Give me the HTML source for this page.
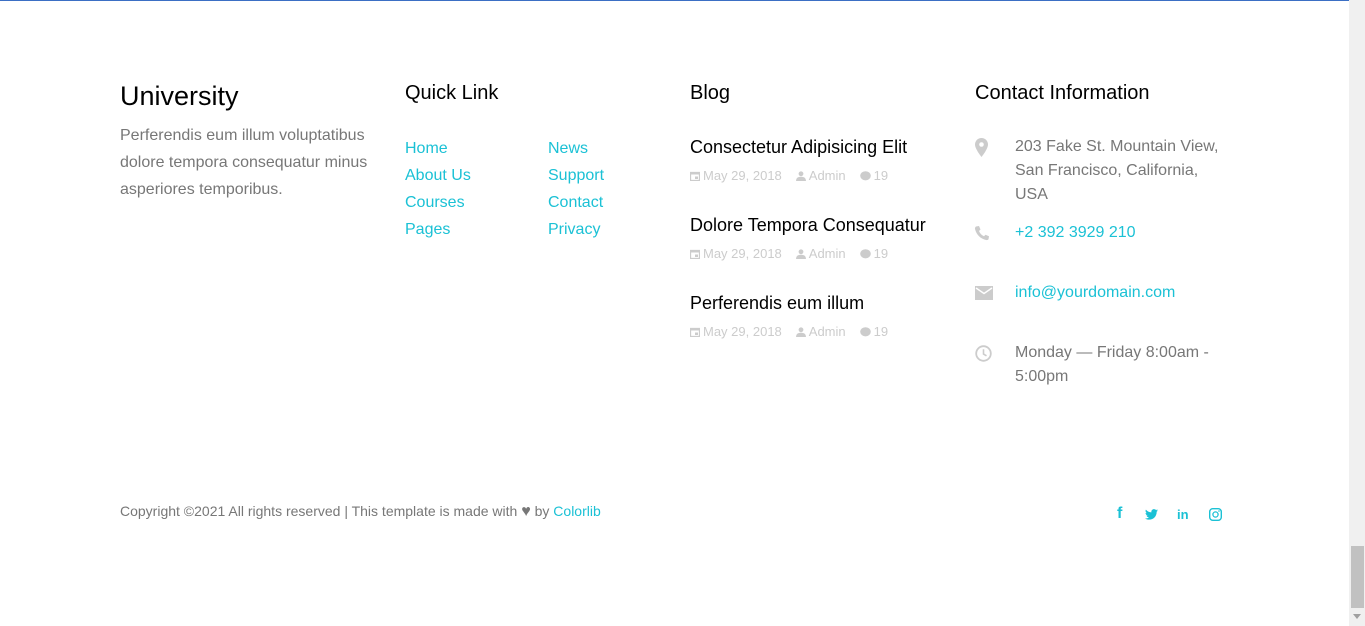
<!DOCTYPE html>
<html><head><meta charset="utf-8">
<style>
*{margin:0;padding:0;box-sizing:border-box}
html,body{width:1365px;height:626px;overflow:hidden;background:#fff;font-family:"Liberation Sans",Arial,sans-serif}
.a{position:absolute;white-space:nowrap}
.topline{position:absolute;left:0;top:0;width:1349px;height:1px;background:#3b6fc4}
.sb{position:absolute;left:1349px;top:0;width:16px;height:626px;background:#f0f0f0}
.thumb{position:absolute;left:1351px;top:546px;width:13px;height:62px;background:#c1c1c1}
.gray{color:#777;font-size:16px;line-height:27px}
.link{color:#1bc1d5;font-size:16px}
.bt{color:#000;font-size:18px}
.meta{color:#ccc;font-size:13px;display:flex;align-items:center}
.meta svg{margin-right:3px}
.ct{color:#777;font-size:16px;line-height:24px}
</style></head><body>
<div class="topline"></div>
<div class="a" style="left:120px;top:81px;font-size:27px;color:#000">University</div>
<div class="a gray" style="left:120px;top:122px">Perferendis eum illum voluptatibus<br>dolore tempora consequatur minus<br>asperiores temporibus.</div>

<div class="a" style="left:405px;top:82px;font-size:20px;color:#000">Quick Link</div>
<div class="a link" style="left:405px;top:135px;line-height:27px">Home<br>About Us<br>Courses<br>Pages</div>
<div class="a link" style="left:548px;top:135px;line-height:27px">News<br>Support<br>Contact<br>Privacy</div>

<div class="a" style="left:690px;top:82px;font-size:20px;color:#000">Blog</div>

<div class="a bt" style="left:690px;top:137px">Consectetur Adipisicing Elit</div>
<div class="a meta" style="left:690px;top:168px"><svg width="10" height="10" viewBox="0 0 10 10"><rect x="0.5" y="1.5" width="9" height="8" fill="none" stroke="#ccc" stroke-width="1.3"/><rect x="0.5" y="1.5" width="9" height="2" fill="#ccc"/><rect x="5" y="5.5" width="3" height="2.5" fill="#ccc"/></svg>May 29, 2018<svg style="margin-left:14px" width="10" height="10" viewBox="0 0 10 10"><circle cx="5" cy="2.8" r="2.4" fill="#ccc"/><path d="M0 10 Q0 5.8 5 5.8 Q10 5.8 10 10Z" fill="#ccc"/></svg>Admin<svg style="margin-left:14px" width="11" height="10" viewBox="0 0 11 10"><ellipse cx="5.5" cy="4.8" rx="5.3" ry="4.6" fill="#ccc"/></svg>19</div>

<div class="a bt" style="left:690px;top:215px">Dolore Tempora Consequatur</div>
<div class="a meta" style="left:690px;top:246px"><svg width="10" height="10" viewBox="0 0 10 10"><rect x="0.5" y="1.5" width="9" height="8" fill="none" stroke="#ccc" stroke-width="1.3"/><rect x="0.5" y="1.5" width="9" height="2" fill="#ccc"/><rect x="5" y="5.5" width="3" height="2.5" fill="#ccc"/></svg>May 29, 2018<svg style="margin-left:14px" width="10" height="10" viewBox="0 0 10 10"><circle cx="5" cy="2.8" r="2.4" fill="#ccc"/><path d="M0 10 Q0 5.8 5 5.8 Q10 5.8 10 10Z" fill="#ccc"/></svg>Admin<svg style="margin-left:14px" width="11" height="10" viewBox="0 0 11 10"><ellipse cx="5.5" cy="4.8" rx="5.3" ry="4.6" fill="#ccc"/></svg>19</div>

<div class="a bt" style="left:690px;top:293px">Perferendis eum illum</div>
<div class="a meta" style="left:690px;top:324px"><svg width="10" height="10" viewBox="0 0 10 10"><rect x="0.5" y="1.5" width="9" height="8" fill="none" stroke="#ccc" stroke-width="1.3"/><rect x="0.5" y="1.5" width="9" height="2" fill="#ccc"/><rect x="5" y="5.5" width="3" height="2.5" fill="#ccc"/></svg>May 29, 2018<svg style="margin-left:14px" width="10" height="10" viewBox="0 0 10 10"><circle cx="5" cy="2.8" r="2.4" fill="#ccc"/><path d="M0 10 Q0 5.8 5 5.8 Q10 5.8 10 10Z" fill="#ccc"/></svg>Admin<svg style="margin-left:14px" width="11" height="10" viewBox="0 0 11 10"><ellipse cx="5.5" cy="4.8" rx="5.3" ry="4.6" fill="#ccc"/></svg>19</div>

<div class="a" style="left:975px;top:82px;font-size:20px;color:#000">Contact Information</div>
<svg class="a" style="left:975px;top:138px" width="13" height="19" viewBox="0 0 13 19"><path d="M6.5 0C2.9 0 0 2.9 0 6.5 0 11 6.5 19 6.5 19S13 11 13 6.5C13 2.9 10.1 0 6.5 0Z" fill="#ccc"/><circle cx="6.5" cy="6.5" r="2.3" fill="#fff"/></svg>
<div class="a ct" style="left:1015px;top:135px">203 Fake St. Mountain View,<br>San Francisco, California,<br>USA</div>
<svg class="a" style="left:974px;top:225px" width="16" height="16" viewBox="0 0 16 16"><path d="M2 1.5 L5 1 L6.5 4.5 L5 6 C6 8.5 7.8 10.3 10 11.2 L11.5 9.8 L15 11.3 L14.5 14.3 C14 15 13 15.2 12 15 C6.5 13.8 2.3 9.5 1 4 C0.8 3 1.2 2 2 1.5Z" fill="#ccc"/></svg>
<div class="a link" style="left:1015px;top:224px">+2 392 3929 210</div>
<svg class="a" style="left:975px;top:286px" width="18" height="14" viewBox="0 0 18 14"><rect width="18" height="14" fill="#ccc"/><path d="M1 2 L9 7.5 L17 2" stroke="#fff" stroke-width="1.4" fill="none"/></svg>
<div class="a link" style="left:1015px;top:284px">info@yourdomain.com</div>
<svg class="a" style="left:975px;top:345px" width="17" height="17" viewBox="0 0 17 17"><circle cx="8.5" cy="8.5" r="7.3" fill="none" stroke="#ccc" stroke-width="1.8"/><path d="M8.5 4.3V9l3 1.8" fill="none" stroke="#ccc" stroke-width="1.6"/></svg>
<div class="a ct" style="left:1015px;top:341px">Monday — Friday 8:00am -<br>5:00pm</div>

<div class="a" style="left:120px;top:503px;font-size:14px;color:#777">Copyright ©2021 All rights reserved | This template is made with <span style="color:#777;font-size:16px">♥</span> by <span style="color:#1bc1d5">Colorlib</span></div>

<div class="a" style="left:1117px;top:505px;font-size:16px;font-weight:bold;color:#1bc1d5">f</div>
<svg class="a" style="left:1145px;top:509px" width="13" height="11" viewBox="0 0 24 20"><path d="M24 2.4c-.9.4-1.8.7-2.8.8 1-.6 1.8-1.6 2.2-2.7-1 .6-2 1-3.1 1.2C19.4.7 18.1 0 16.6 0c-2.7 0-4.9 2.2-4.9 4.9 0 .4 0 .8.1 1.1C7.7 5.8 4.1 3.9 1.7.9c-.4.7-.7 1.6-.7 2.5 0 1.7.9 3.2 2.2 4.1-.8 0-1.6-.2-2.2-.6v.1c0 2.4 1.7 4.4 3.9 4.8-.4.1-.8.2-1.3.2-.3 0-.6 0-.9-.1.6 2 2.4 3.4 4.6 3.4-1.7 1.3-3.8 2.1-6.1 2.1-.4 0-.8 0-1.2-.1 2.2 1.4 4.8 2.2 7.5 2.2 9.1 0 14-7.5 14-14v-.6c1-.7 1.8-1.6 2.5-2.5z" fill="#1bc1d5"/></svg>
<div class="a" style="left:1177px;top:507px;font-size:13px;font-weight:bold;color:#1bc1d5">in</div>
<svg class="a" style="left:1209px;top:508px" width="13" height="13" viewBox="0 0 13 13"><rect x="0.7" y="0.7" width="11.6" height="11.6" rx="3" fill="none" stroke="#1bc1d5" stroke-width="1.4"/><circle cx="6.5" cy="6.5" r="2.6" fill="none" stroke="#1bc1d5" stroke-width="1.3"/><circle cx="10" cy="3" r=".8" fill="#1bc1d5"/></svg>

<div class="sb"></div>
<div class="thumb"></div>
<svg class="a" style="left:1353px;top:614px" width="8" height="5" viewBox="0 0 8 5"><path d="M0 0H8L4 5Z" fill="#a0a0a0"/></svg>
</body></html>
